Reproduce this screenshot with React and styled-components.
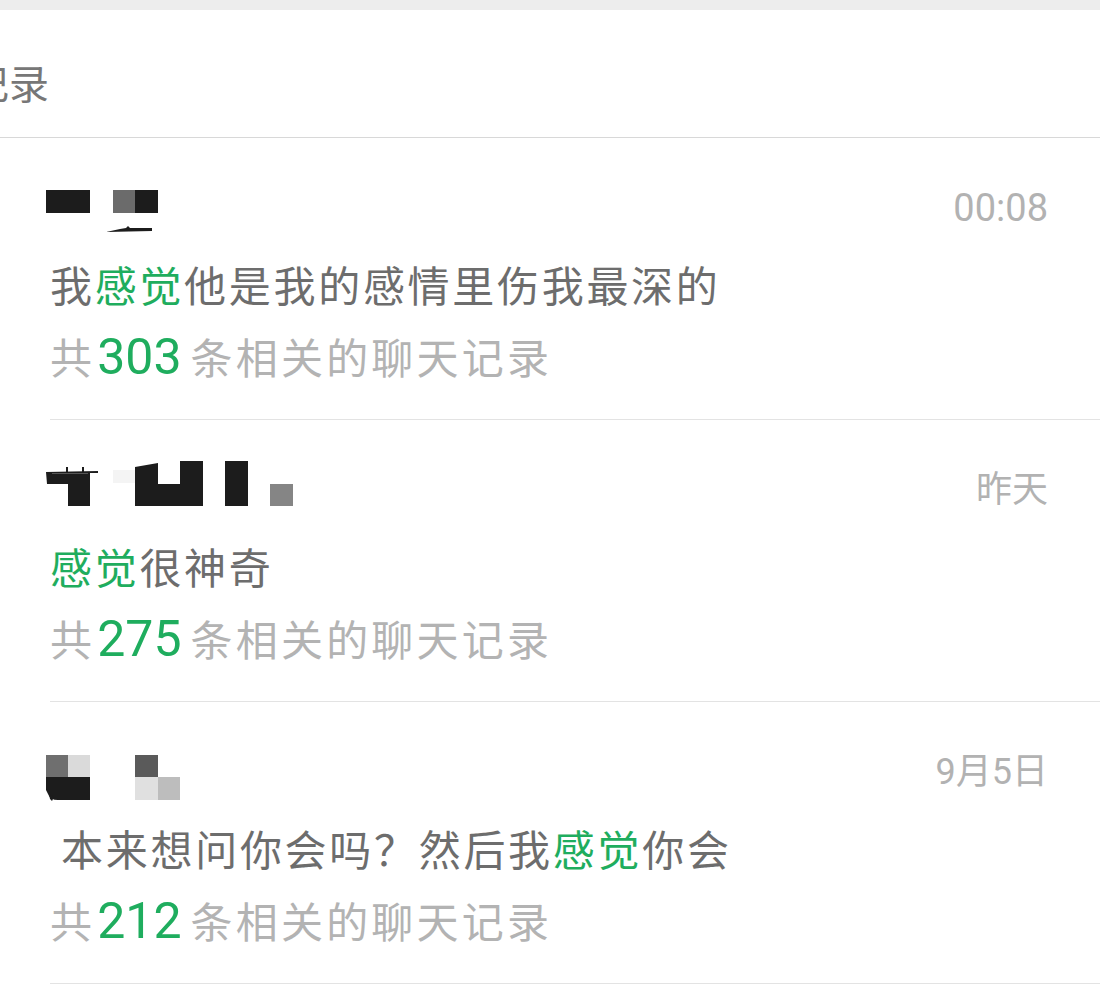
import React from 'react';
import styled, { createGlobalStyle } from 'styled-components';

const GlobalStyle = createGlobalStyle`
  html, body {
    margin: 0;
    padding: 0;
    background: #ffffff;
  }
  body {
    font-family: Roboto, "Noto Sans CJK SC", "Noto Sans", sans-serif;
    -webkit-font-smoothing: antialiased;
  }
`;

const results = [
  {
    id: 1,
    time: '00:08',
    timeIsNumber: true,
    message: '我感觉他是我的感情里伤我最深的',
    count: 303,
    top: 178,
    mosaic: [
      { t: 'rect', x: 46, y: 190, w: 44, h: 23, fill: '#1c1c1c' },
      { t: 'rect', x: 113, y: 190, w: 22, h: 23, fill: '#6b6b6b' },
      { t: 'rect', x: 135, y: 190, w: 23, h: 23, fill: '#1c1c1c' },
      { t: 'poly', points: '106,232 120,229 126,228 128,226 130,228 152,228 152,231', fill: '#1c1c1c' },
    ],
  },
  {
    id: 2,
    time: '昨天',
    message: '感觉很神奇',
    count: 275,
    top: 460,
    mosaic: [
      { t: 'poly', points: '46,472 98,471 98,473 90,473 90,506 68,506 68,484 47,484', fill: '#1c1c1c' },
      { t: 'rect', x: 66, y: 467, w: 2, h: 6, fill: '#1c1c1c' },
      { t: 'rect', x: 82, y: 467, w: 2, h: 6, fill: '#1c1c1c' },
      { t: 'rect', x: 52, y: 473, w: 36, h: 1, fill: '#555555' },
      { t: 'rect', x: 113, y: 470, w: 22, h: 13, fill: '#f4f4f4' },
      { t: 'poly', points: '135,467 158,463 158,484 180,484 180,461 203,461 203,506 135,506', fill: '#1c1c1c' },
      { t: 'rect', x: 225, y: 461, w: 23, h: 45, fill: '#1c1c1c' },
      { t: 'rect', x: 270, y: 484, w: 23, h: 22, fill: '#858585' },
    ],
  },
  {
    id: 3,
    time: '9月5日',
    message: ' 本来想问你会吗？然后我感觉你会',
    count: 212,
    top: 742,
    mosaic: [
      { t: 'rect', x: 46, y: 755, w: 22, h: 22, fill: '#6f6f6f' },
      { t: 'rect', x: 68, y: 755, w: 22, h: 22, fill: '#dadada' },
      { t: 'path', d: 'M46 777 H90 V800 H58 Q50 800 48 794 L46 790 Z', fill: '#1c1c1c' },
      { t: 'poly', points: '49,794 54,797 52,801 50,799', fill: '#1c1c1c' },
      { t: 'rect', x: 135, y: 755, w: 23, h: 22, fill: '#5a5a5a' },
      { t: 'rect', x: 135, y: 777, w: 23, h: 23, fill: '#e0e0e0' },
      { t: 'rect', x: 158, y: 777, w: 22, h: 23, fill: '#bdbdbd' },
    ],
  },
];

const KEYWORD = '感觉';

const Page = styled.div`
  width: 100%;
  min-height: 994px;
  background: #ffffff;
  overflow: hidden;
`;

const StatusStrip = styled.div`
  height: 10px;
  background: #ededed;
`;

const Header = styled.header`
  box-sizing: border-box;
  height: 128px;
  padding-top: 52px;
  border-bottom: 1px solid #d8d8d8;
  overflow: hidden;
  white-space: nowrap;
`;

/* the title runs off the left edge in the capture, only "…录" shows */
const Title = styled.h1`
  margin: 0 0 0 -111px;
  font-family: "Noto Sans CJK SC", sans-serif;
  font-size: 40px;
  font-weight: 400;
  line-height: 40px;
  color: #777777;
`;

const List = styled.ul`
  list-style: none;
  margin: 0;
  padding: 0;
`;

const Item = styled.li`
  box-sizing: border-box;
  height: 282px;
  margin-left: 50px;
  padding: 40px 52px 0 0;
  border-bottom: 1px solid #e3e3e3;
`;

const TopRow = styled.div`
  display: flex;
  align-items: center;
  justify-content: space-between;
  height: 60px;
`;

const Mosaic = styled.svg`
  display: block;
  width: 260px;
  height: 60px;
  margin-left: -4px;
`;

const Time = styled.span`
  font-size: ${(p) => (p.$number ? '38px' : '36px')};
  line-height: 60px;
  color: #b2b2b2;
`;

const Message = styled.p`
  margin: 22px 0 0;
  font-size: 42px;
  line-height: 56px;
  letter-spacing: 2.7px;
  word-spacing: -2px;
  color: #6d6d6d;
  white-space: pre;
`;

const Highlight = styled.span`
  color: #1fad5e;
`;

const Count = styled.p`
  margin: 13px 0 0;
  font-size: 42px;
  line-height: 56px;
  letter-spacing: 3.2px;
  word-spacing: -13.6px;
  color: #b3b3b3;
  white-space: pre;
`;

const Num = styled.span`
  display: inline-block;
  margin: 0 9px 0 2px;
  font-size: 50px;
  letter-spacing: 0;
  color: #1fad5e;
`;

const MosaicShape = ({ s }) => {
  if (s.t === 'rect') return <rect x={s.x} y={s.y} width={s.w} height={s.h} fill={s.fill} />;
  if (s.t === 'poly') return <polygon points={s.points} fill={s.fill} />;
  return <path d={s.d} fill={s.fill} />;
};

const renderMessage = (text) =>
  text.split(KEYWORD).map((part, i, arr) => (
    <React.Fragment key={i}>
      {part}
      {i < arr.length - 1 && <Highlight>{KEYWORD}</Highlight>}
    </React.Fragment>
  ));

const ResultItem = ({ item }) => (
  <Item>
    <TopRow>
      <Mosaic viewBox={`46 ${item.top} 260 60`}>
        {item.mosaic.map((s, i) => (
          <MosaicShape key={i} s={s} />
        ))}
      </Mosaic>
      <Time $number={item.timeIsNumber}>{item.time}</Time>
    </TopRow>
    <Message>{renderMessage(item.message)}</Message>
    <Count>
      共 <Num>{item.count}</Num> 条相关的聊天记录
    </Count>
  </Item>
);

export default function App() {
  return (
    <Page>
      <GlobalStyle />
      <StatusStrip />
      <Header>
        <Title>聊天记录</Title>
      </Header>
      <List>
        {results.map((item) => (
          <ResultItem key={item.id} item={item} />
        ))}
      </List>
    </Page>
  );
}
